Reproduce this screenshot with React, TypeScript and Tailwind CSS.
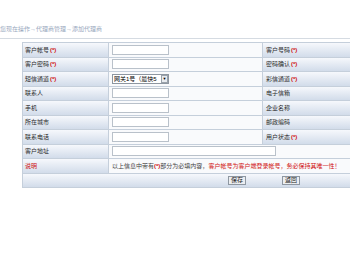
import React from 'react';

const Star = () => <span className="ml-[1px] text-[#d01010] font-bold">(*)</span>;

const labelCls =
  'flex items-center pl-[2px] border-r border-b border-[#c5cfdb] bg-gradient-to-b from-[#f6f8fc] to-[#d2dcea] text-[#2a2a2a]';
const valueCls = 'flex items-center pl-[3px] border-r border-b border-[#c5cfdb] bg-[#f9fafc]';

const TextBox = ({ wide = false }: { wide?: boolean }) => (
  <div
    className={`h-[10px] border border-[#b9c1ca] bg-white ${wide ? 'w-[164px]' : 'w-[57px]'}`}
  />
);

interface Row {
  l1: string;
  r1?: boolean;
  l2: string;
  r2?: boolean;
  select?: boolean;
}

const rows: Row[] = [
  { l1: '客户帐号', r1: true, l2: '客户号码', r2: true },
  { l1: '客户密码', r1: true, l2: '密码确认', r2: true },
  { l1: '短信通道', r1: true, l2: '彩信通道', r2: true, select: true },
  { l1: '联系人', l2: '电子信箱' },
  { l1: '手机', l2: '企业名称' },
  { l1: '所在城市', l2: '邮政编码' },
  { l1: '联系电话', l2: '用户状态', r2: true },
];

export default function App() {
  return (
    <div
      className="w-[350px] h-[280px] overflow-hidden bg-white text-[6px] leading-none"
      style={{ fontFamily: '"Liberation Sans", "Noto Sans CJK SC", sans-serif' }}
    >
      <div className="h-[38px] flex items-end pb-[6px] text-[#98a7bd] whitespace-nowrap">
        您现在操作→代理商管理→添加代理商
      </div>
      <div className="border-t border-[#d5dbe2] pt-[3px]">
        <div className="ml-[22px] w-[520px] border-l border-t border-[#c5cfdb]">
          {rows.map((r) => (
            <div key={r.l1} className="flex h-[14.5px]">
              <div className={`${labelCls} w-[86px]`}>
                {r.l1}
                {r.r1 && <Star />}
              </div>
              <div className={`${valueCls} w-[154px]`}>
                {r.select ? (
                  <div className="flex items-center h-[10px] w-[57px] border border-[#8d96a0] bg-white">
                    <span className="flex-1 pl-[1px] overflow-hidden whitespace-nowrap">网关1号（最快5</span>
                    <span className="flex items-center justify-center w-[7px] h-[8px] border border-[#9aa2ab] bg-[#e8ebef] text-[4px]">
                      ▼
                    </span>
                  </div>
                ) : (
                  <TextBox />
                )}
              </div>
              <div className={`${labelCls} w-[88px] pl-[3px]`}>
                {r.l2}
                {r.r2 && <Star />}
              </div>
              <div className={`${valueCls} flex-1`}>
                <TextBox />
              </div>
            </div>
          ))}
          <div className="flex h-[14.5px]">
            <div className={`${labelCls} w-[86px]`}>客户地址</div>
            <div className={`${valueCls} flex-1`}>
              <TextBox wide />
            </div>
          </div>
          <div className="flex h-[14.5px]">
            <div className={`${labelCls} w-[86px] text-[#d01010]`}>说明</div>
            <div className={`${valueCls} flex-1 whitespace-nowrap text-[#444]`}>
              以上信息中带有<span className="text-[#d01010] font-bold">(*)</span>部分为必填内容，
              <span className="text-[#d01010]">客户帐号为客户端登录帐号，务必保持其唯一性！</span>
            </div>
          </div>
          <div className="flex h-[14.5px]">
            <div className="flex-1 flex items-center border-r border-b border-[#c5cfdb] bg-gradient-to-b from-[#f6f8fc] to-[#d2dcea]">
              <div className="w-[205px]" />
              <button className="h-[9px] px-[2px] border border-[#8e97a1] bg-[#eceef1] text-[#222] text-[6px] leading-none">
                保存
              </button>
              <div className="w-[36px]" />
              <button className="h-[9px] px-[2px] border border-[#8e97a1] bg-[#eceef1] text-[#222] text-[6px] leading-none">
                返回
              </button>
            </div>
          </div>
        </div>
      </div>
    </div>
  );
}
